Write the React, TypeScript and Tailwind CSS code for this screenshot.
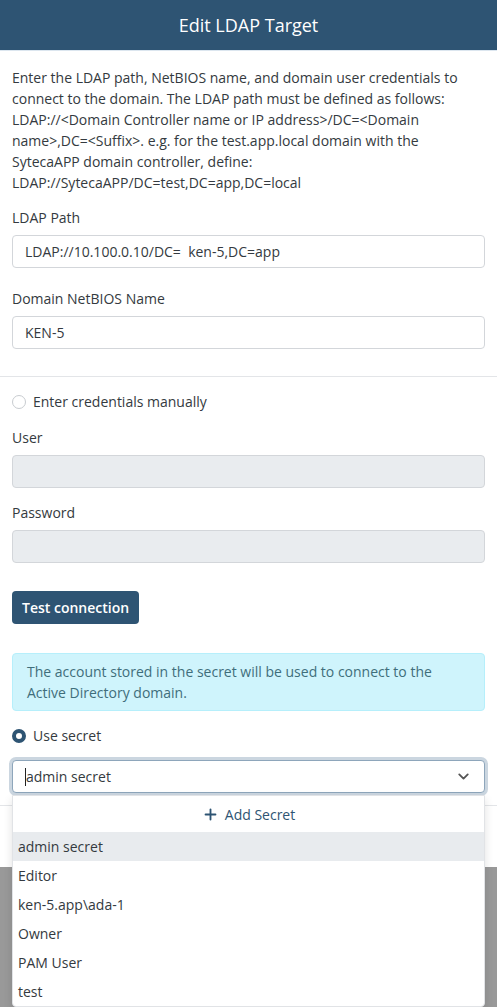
import { ChevronDown, Plus } from "lucide-react";

const secrets = ["admin secret", "Editor", "ken-5.app\\ada-1", "Owner", "PAM User", "test"];

const Label = ({ text, className }: { text: string; className?: string }) => (
  <p className={"leading-[21px] " + (className ?? "")}>{text}</p>
);

const TextInput = ({ value, disabled }: { value?: string; disabled?: boolean }) => (
  <div
    className={
      "h-[33px] rounded-[4px] border border-[#d3d6da] px-3 flex items-center leading-[21px] whitespace-pre " +
      (disabled ? "bg-[#e9ecef]" : "bg-white")
    }
  >
    {value}
  </div>
);

const Radio = ({ checked, text }: { checked?: boolean; text: string }) => (
  <div className="flex items-center gap-[7px] leading-[21px]">
    {checked ? (
      <span className="size-[14px] rounded-full border-[4px] border-[#2e5473] bg-white" />
    ) : (
      <span className="size-[14px] rounded-full border border-[#c8ccd0] bg-white" />
    )}
    <span>{text}</span>
  </div>
);

export default function App() {
  return (
    <div
      className="min-h-screen bg-[#999999] text-[14px] text-[#343a40]"
      style={{ fontFamily: '"Open Sans", "Liberation Sans", sans-serif' }}
    >
      <div className="bg-white">
        <div className="h-[51px] bg-[#2e5473] border-b border-[#dce6ef] flex items-center justify-center">
          <h1 className="text-white text-[18px]">Edit LDAP Target</h1>
        </div>

        <div className="px-3 pt-[16px]">
          <p className="leading-[21px]">
            Enter the LDAP path, NetBIOS name, and domain user credentials to connect to the domain. The
            LDAP path must be defined as follows: LDAP://&lt;Domain Controller name or IP
            address&gt;/DC=&lt;Domain name&gt;,DC=&lt;Suffix&gt;. e.g. for the test.app.local domain
            with the SytecaAPP domain controller, define: LDAP://SytecaAPP/DC=test,DC=app,DC=local
          </p>

          <Label text="LDAP Path" className="mt-[14px] mb-[7px]" />
          <TextInput value="LDAP://10.100.0.10/DC=  ken-5,DC=app" />

          <Label text="Domain NetBIOS Name" className="mt-[20px] mb-[7px]" />
          <TextInput value="KEN-5" />
        </div>

        <div className="mt-[27px] border-t border-[#e3e5e8]" />

        <div className="px-3 pt-[14px]">
          <Radio text="Enter credentials manually" />

          <Label text="User" className="mt-[15px] mb-[7px]" />
          <TextInput disabled />

          <Label text="Password" className="mt-[14px] mb-[7px]" />
          <TextInput disabled />

          <button className="mt-[28px] h-[33px] px-[10px] rounded-[4px] bg-[#2e5473] text-white font-semibold leading-[21px]">
            Test connection
          </button>

          <div className="mt-[29px] rounded-[4px] border border-[#b6effb] bg-[#cff4fc] px-[14px] py-[7px] text-[#3f6e7b] leading-[21px]">
            The account stored in the secret will be used to connect to the Active Directory domain.
          </div>

          <div className="mt-[14px]">
            <Radio checked text="Use secret" />
          </div>

          <div className="relative mt-[14px]">
            <div className="h-[33px] rounded-[4px] border border-[#8ea6bb] bg-white pl-3 pr-3 flex items-center justify-between leading-[21px] shadow-[0_0_0_3px_#cbd6e0]">
              <span className="flex items-center">
                <span className="w-px h-[18px] bg-[#222]" />
                <span>admin secret</span>
              </span>
              <ChevronDown className="size-[17px] text-[#555]" strokeWidth={2.6} />
            </div>

            <div className="absolute left-0 right-0 top-[35px] z-10 bg-white border border-[#e1e3e6] rounded-b-[4px] shadow-[0_4px_10px_rgba(0,0,0,0.12)]">
              <div className="h-[36px] flex items-center justify-center gap-[6px] text-[#2e5473]">
                <Plus className="size-[17px]" strokeWidth={2.6} />
                <span>Add Secret</span>
              </div>
              {secrets.map((s, i) => (
                <div
                  key={s}
                  className={
                    "h-[29px] px-[5px] flex items-center leading-[21px] " +
                    (i === 0 ? "bg-[#e8ebee]" : "")
                  }
                >
                  {s}
                </div>
              ))}
            </div>
          </div>
        </div>

        <div className="mt-[12px] border-t border-[#e3e5e8] h-[62px]" />
      </div>
    </div>
  );
}
